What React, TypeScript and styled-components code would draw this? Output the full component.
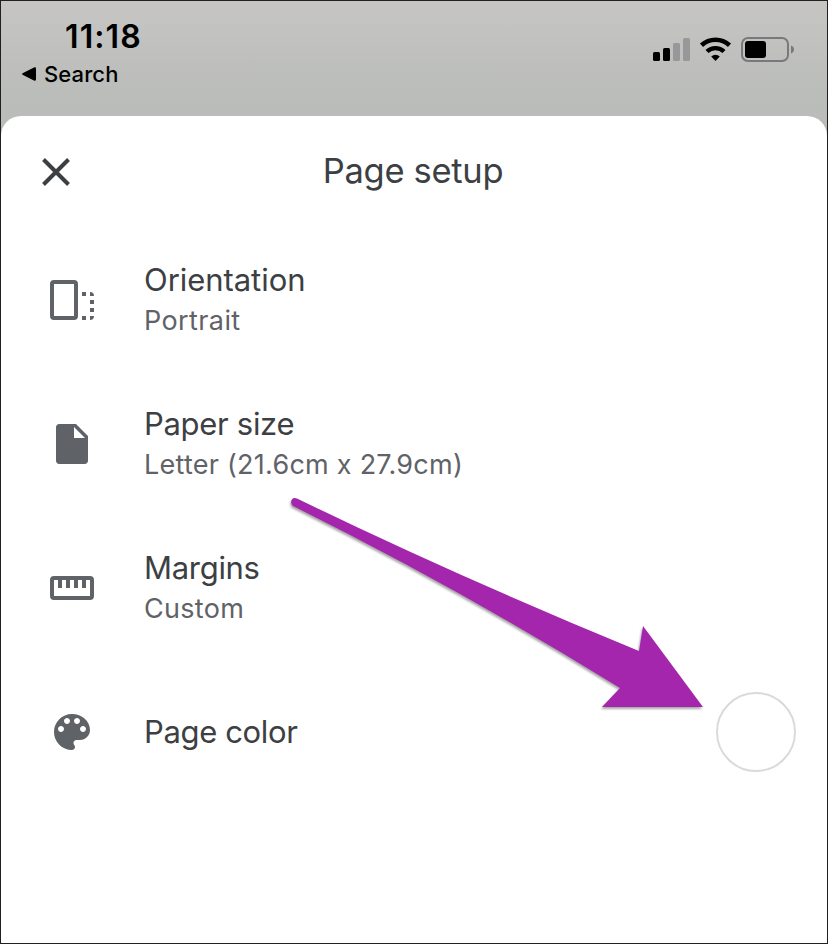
import React from 'react';
import styled, { createGlobalStyle } from 'styled-components';

const Global = createGlobalStyle`
  * { box-sizing: border-box; }
  body { margin: 0; background: #fff; }
`;

const Screen = styled.div`
  position: relative;
  display: flex;
  flex-direction: column;
  width: 828px;
  height: 944px;
  border: 1px solid #231f20;
  overflow: hidden;
  background: linear-gradient(#c6c5c3 0, #bbbdba 90px, #babcb9 140px);
  font-family: Inter, 'Liberation Sans', sans-serif;
`;

const StatusBar = styled.header`
  display: flex;
  justify-content: space-between;
  height: 115px;
  flex: none;
  padding: 15px 33px 0 21px;
  color: #000;
`;

const StatusLeft = styled.div`
  display: flex;
  flex-direction: column;
`;

const Clock = styled.div`
  margin-left: 43px;
  padding-top: 1px;
  font-size: 32px;
  line-height: 39px;
  font-weight: 600;
  letter-spacing: 1.1px;
`;

const BackLink = styled.div`
  display: flex;
  align-items: center;
  gap: 8px;
  height: 36px;
  font-size: 22px;
  font-weight: 450;
  letter-spacing: 0.1px;
`;

const StatusIcons = styled.svg`
  display: block;
  margin-top: 20px;
`;

const Sheet = styled.main`
  flex: 1;
  background: #fff;
  border-radius: 20px 20px 0 0;
`;

const SheetHeader = styled.div`
  display: grid;
  grid-template-columns: 110px 1fr 110px;
  align-items: center;
  height: 112px;
`;

const CloseButton = styled.button`
  display: flex;
  justify-self: start;
  margin-left: 39px;
  padding: 0;
  border: 0;
  background: none;
`;

const Title = styled.h1`
  margin: 0;
  padding: 0 2px 2px 0;
  text-align: center;
  font-size: 34.5px;
  line-height: 44px;
  font-weight: 400;
  letter-spacing: -0.3px;
  color: #3c4043;
`;

const Row = styled.div`
  display: flex;
  align-items: center;
  height: 144px;
  padding: 0 31px 0 47px;
`;

const RowIcon = styled.svg`
  flex: none;
  width: 48px;
  height: 48px;
  fill: #5f6368;
`;

const RowText = styled.div`
  flex: 1;
  margin-left: 48px;
  padding-top: 2px;
`;

const Label = styled.div<{ $ls: number }>`
  margin-bottom: 2px;
  font-size: 31px;
  line-height: 38px;
  letter-spacing: ${(p) => p.$ls}px;
  color: #3c4043;
`;

const Value = styled.div<{ $ls: number }>`
  font-size: 27px;
  line-height: 40px;
  letter-spacing: ${(p) => p.$ls}px;
  color: #5f6368;
`;

const Swatch = styled.div`
  width: 80px;
  height: 80px;
  border: 2px solid #dadada;
  border-radius: 50%;
  background: #fff;
`;

const Pointer = styled.svg`
  position: absolute;
  left: 279px;
  top: 479px;
  filter: drop-shadow(-1px 2px 1px rgba(0, 0, 0, 0.35));
`;

const OrientationIcon = () => (
  <RowIcon viewBox="0 0 48 48">
    <rect x="4" y="6" width="24" height="36" rx="2" fill="none" stroke="#5f6368" strokeWidth="4" />
    <path d="M34 16h4v4h-4zM42 16a4 4 0 0 1 4 4h-4zM42 24h4v4h-4zM42 32h4v4h-4zM34 40h4v4h-4zM42 40h4a4 4 0 0 1-4 4z" />
  </RowIcon>
);

const PaperIcon = () => (
  <RowIcon viewBox="0 0 24 24">
    <path d="M5.6 2C4.7 2 4 2.7 4 3.6v16.8c0 .9.7 1.6 1.6 1.6h12.8c.9 0 1.6-.7 1.6-1.6V8l-6-6H5.6zM13 9V3.500L18.500 9H13z" />
  </RowIcon>
);

const RulerIcon = () => (
  <RowIcon viewBox="0 0 48 48">
    <rect x="4" y="14" width="40" height="20" rx="2" fill="none" stroke="#5f6368" strokeWidth="4" />
    <path d="M10 15h4v9h-4zM18 15h4v9h-4zM26 15h4v9h-4zM34 15h4v9h-4z" />
  </RowIcon>
);

const PaletteIcon = () => (
  <RowIcon viewBox="0 0 24 24">
    <path d="M12 3c-4.97 0-9 4.03-9 9s4.03 9 9 9c.83 0 1.5-.67 1.5-1.5 0-.39-.15-.74-.39-1.01-.23-.26-.38-.61-.38-.99 0-.83.67-1.5 1.5-1.5H16c2.76 0 5-2.24 5-5 0-4.42-4.03-8-9-8zm-5.5 9c-.83 0-1.5-.67-1.5-1.5S5.67 9 6.5 9 8 9.67 8 10.5 7.33 12 6.5 12zm3-4C8.67 8 8 7.33 8 6.5S8.67 5 9.5 5s1.5.67 1.5 1.5S10.33 8 9.5 8zm5 0c-.83 0-1.5-.67-1.5-1.5S13.67 5 14.5 5s1.5.67 1.5 1.5S15.33 8 14.5 8zm3 4c-.83 0-1.5-.67-1.5-1.5S16.67 9 17.5 9s1.5.67 1.5 1.5-.67 1.5-1.5 1.5z" />
  </RowIcon>
);

const rows = [
  { Icon: OrientationIcon, label: 'Orientation', ls: -0.05, value: 'Portrait', vls: 0.4 },
  { Icon: PaperIcon, label: 'Paper size', ls: -0.3, value: 'Letter (21.6cm x 27.9cm)', vls: 0.25 },
  { Icon: RulerIcon, label: 'Margins', ls: -0.3, value: 'Custom', vls: 0.3 },
  { Icon: PaletteIcon, label: 'Page color', ls: -0.35, swatch: true },
];

export default function App() {
  return (
    <>
      <Global />
      <Screen>
        <StatusBar>
          <StatusLeft>
            <Clock>11:18</Clock>
            <BackLink>
              <svg width="14" height="14" viewBox="0 0 14 14">
                <path d="M.6 6.2 12.4.3Q14 0 14 1.4v11.2q0 1.4-1.6 1.1L.6 7.8Q-.4 7 .6 6.2z" />
              </svg>
              Search
            </BackLink>
          </StatusLeft>
          <StatusIcons width="142" height="28" viewBox="652 36 142 28">
            <rect x="653" y="52" width="7" height="9" rx="1.5" />
            <rect x="663" y="48" width="7" height="13" rx="1.5" />
            <rect x="673" y="43" width="7" height="18" rx="1.5" fill="#98989a" />
            <rect x="683" y="38" width="7" height="23" rx="1.5" fill="#98989a" />
            <path d="M701.5 45.3a20.5 20.5 0 0 1 28 0" fill="none" stroke="#000" strokeWidth="4.6" />
            <path d="M707 51.5a12.5 12.5 0 0 1 17 0" fill="none" stroke="#000" strokeWidth="4.4" />
            <path d="M711.2 56.4a6.5 6.5 0 0 1 8.6 0l-4.3 4.6z" />
            <rect x="742" y="38" width="46" height="23" rx="6" fill="none" stroke="#78797c" strokeWidth="2" />
            <rect x="745" y="41" width="21" height="17" rx="3" />
            <path d="M791 45.500q3 1.200 3 4t-3 4z" fill="#78797c" />
          </StatusIcons>
        </StatusBar>
        <Sheet>
          <SheetHeader>
            <CloseButton aria-label="Close">
              <svg width="32" height="32" viewBox="0 0 32 32" stroke="#3c4043" strokeWidth="4">
                <path d="M3.500 3.500l25 25M28.500 3.500l-25 25" />
              </svg>
            </CloseButton>
            <Title>Page setup</Title>
          </SheetHeader>
          {rows.map(({ Icon, label, ls, value, vls, swatch }) => (
            <Row key={label}>
              <Icon />
              <RowText>
                <Label $ls={ls}>{label}</Label>
                {value && <Value $ls={vls ?? 0}>{value}</Value>}
              </RowText>
              {swatch && <Swatch />}
            </Row>
          ))}
        </Sheet>
        <Pointer width="440" height="240" viewBox="280 480 440 240">
          <path
            fill="#a426ad"
            d="M297 498.500Q460 577.500 639 651L643 626 703 707H602L620 688Q460 589 293 506C289 502 292 496 297 498.500z"
          />
        </Pointer>
      </Screen>
    </>
  );
}
